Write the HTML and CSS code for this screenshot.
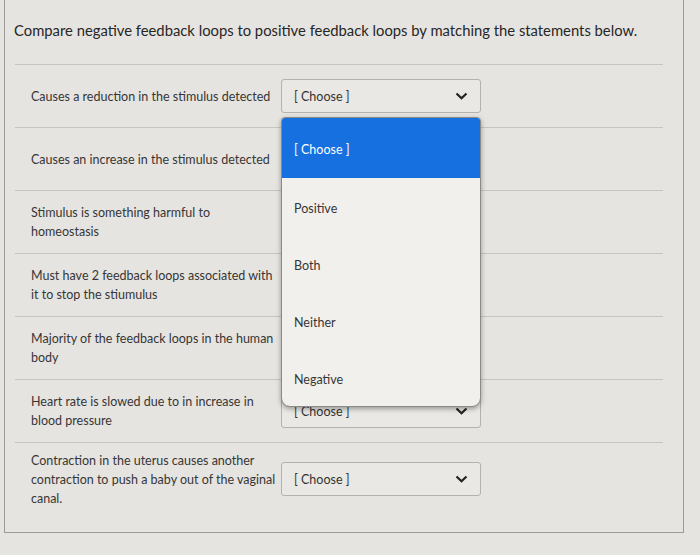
FILE: index.html
```html
<!DOCTYPE html>
<html lang="en">
<head>
    <meta charset="UTF-8">
    <meta name="viewport" content="width=device-width, initial-scale=1.0">
    <title>Matching Question</title>
    <link rel="stylesheet" href="styles.css">
</head>
<body>
    <div class="frame">
        <p class="title">Compare negative feedback loops to positive feedback loops by matching the statements below.</p>
        <div class="rows">
            <div class="row">
                <div class="label">Causes a reduction in the stimulus detected</div>
                <div class="select">
                    <span>[ Choose ]</span>
                    <svg class="chev" width="13" height="8" viewBox="0 0 13 8"><path d="M1.5 1.5 L6.5 6.2 L11.5 1.5" fill="none" stroke="#222" stroke-width="2.2"/></svg>
                    <div class="menu">
                        <div class="opt active">[ Choose ]</div>
                        <div class="opt">Positive</div>
                        <div class="opt">Both</div>
                        <div class="opt">Neither</div>
                        <div class="opt">Negative</div>
                    </div>
                </div>
            </div>
            <div class="row">
                <div class="label">Causes an increase in the stimulus detected</div>
                <div class="select covered">
                    <span>[ Choose ]</span>
                </div>
            </div>
            <div class="row">
                <div class="label">Stimulus is something harmful to homeostasis</div>
                <div class="select covered">
                    <span>[ Choose ]</span>
                </div>
            </div>
            <div class="row">
                <div class="label">Must have 2 feedback loops associated with it to stop the stiumulus</div>
                <div class="select covered">
                    <span>[ Choose ]</span>
                </div>
            </div>
            <div class="row">
                <div class="label">Majority of the feedback loops in the human body</div>
                <div class="select covered">
                    <span>[ Choose ]</span>
                </div>
            </div>
            <div class="row">
                <div class="label">Heart rate is slowed due to in increase in blood pressure</div>
                <div class="select">
                    <span>[ Choose ]</span>
                    <svg class="chev" width="13" height="8" viewBox="0 0 13 8"><path d="M1.5 1.5 L6.5 6.2 L11.5 1.5" fill="none" stroke="#222" stroke-width="2.2"/></svg>
                </div>
            </div>
            <div class="row last">
                <div class="label">Contraction in the uterus causes another contraction to push a baby out of the vaginal canal.</div>
                <div class="select">
                    <span>[ Choose ]</span>
                    <svg class="chev" width="13" height="8" viewBox="0 0 13 8"><path d="M1.5 1.5 L6.5 6.2 L11.5 1.5" fill="none" stroke="#222" stroke-width="2.2"/></svg>
                </div>
            </div>
        </div>
    </div>
</body>
</html>
```

FILE: styles.css
```css
body {
    margin: 0;
    background-color: #e6e4e0;
    font-family: Lato, "Open Sans", sans-serif;
    color: #363636;
}
.frame {
    width: 680px;
    height: 533px;
    box-sizing: border-box;
    margin-left: 4px;
    border: 1px solid #9c9a96;
    border-top: none;
    padding: 0 20px 0 10px;
}
.title {
    margin: 0 0 0 -1px;
    padding: 21px 0 0 0;
    height: 64px;
    box-sizing: border-box;
    font-size: 14.8px;
    color: #262626;
}
.rows {
    border-top: 1px solid #c6c4c0;
}
.row {
    display: flex;
    align-items: center;
    height: 62px;
    padding-left: 16px;
    border-bottom: 1px solid #c6c4c0;
}
.row.last {
    height: 72px;
    border-bottom: none;
}
.label {
    width: 250px;
    font-size: 12.5px;
    line-height: 19px;
}
.select {
    position: relative;
    width: 200px;
    height: 34px;
    box-sizing: border-box;
    border: 1px solid #b4b2ae;
    border-radius: 3px;
    background-color: #eae8e4;
    display: flex;
    align-items: center;
    justify-content: space-between;
    padding: 0 12px 0 12px;
    font-size: 12.5px;
    color: #333;
}
.select.covered {
    visibility: hidden;
}
.menu {
    position: absolute;
    left: -1px;
    top: 37px;
    width: 198px;
    height: 288px;
    background-color: #f1f0ed;
    border: 1px solid #8c8a86;
    border-radius: 4px 4px 9px 9px;
    box-shadow: 0 2px 5px rgba(0, 0, 0, 0.35);
    overflow: hidden;
    z-index: 2;
}
.opt {
    height: 57px;
    padding: 23px 0 0 12px;
    box-sizing: border-box;
    font-size: 12.5px;
    color: #363636;
}
.opt.active {
    height: 60px;
    padding-top: 24px;
    background-color: #1670e0;
    color: #fff;
}
```
